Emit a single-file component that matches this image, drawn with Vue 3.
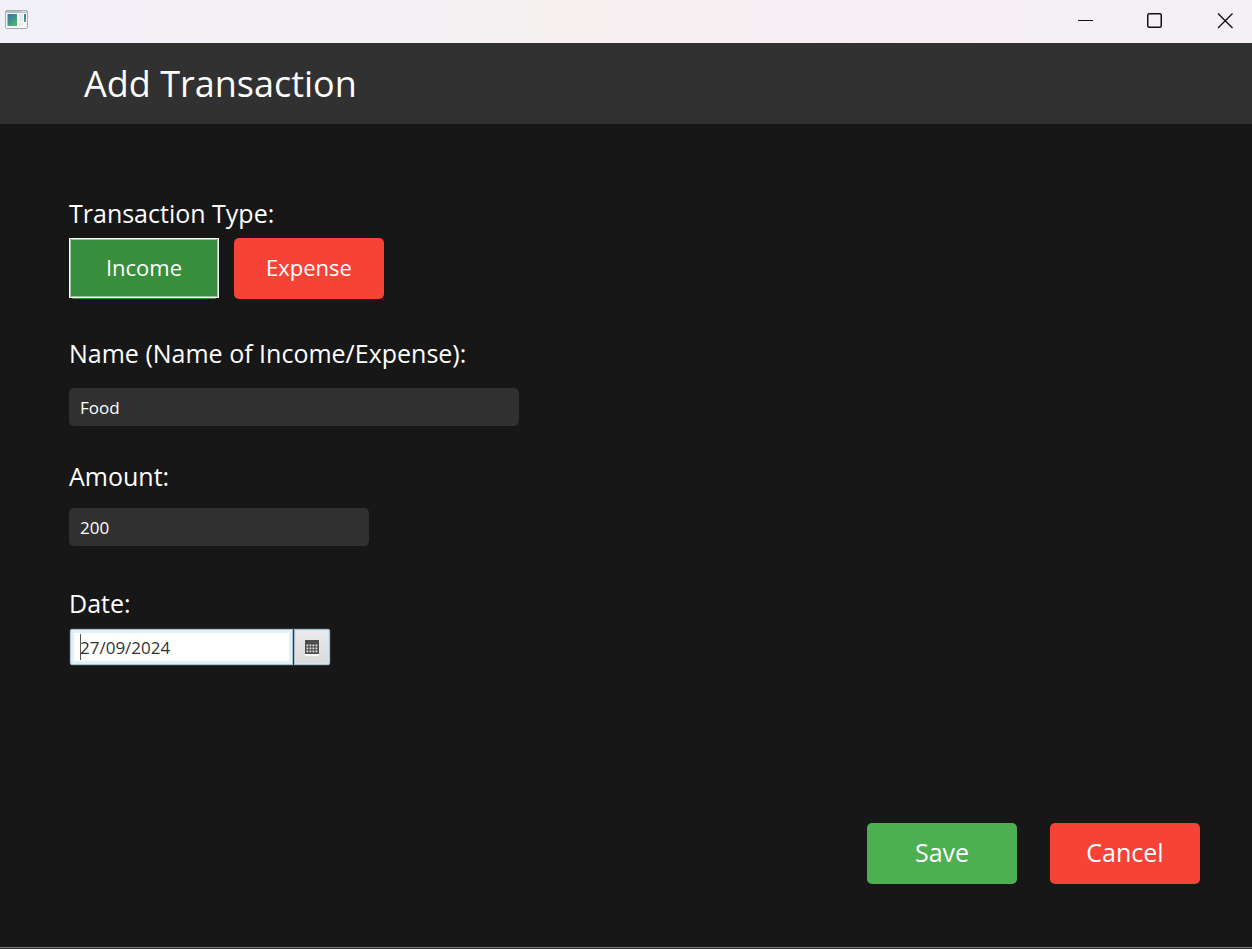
<script setup>
import { ref } from 'vue'

const type = ref('income')
const name = ref('Food')
const amount = ref('200')
const date = ref('27/09/2024')
</script>

<template>
  <div class="window">
    <div class="titlebar">
      <svg class="app-icon" width="24" height="20" viewBox="0 0 24 20" aria-hidden="true">
        <defs>
          <linearGradient id="pane" x1="0" y1="0" x2="0.6" y2="1">
            <stop offset="0" stop-color="#3f73a8" />
            <stop offset="0.5" stop-color="#3d8f92" />
            <stop offset="1" stop-color="#54b06c" />
          </linearGradient>
        </defs>
        <rect x="0.5" y="0.5" width="22" height="18" rx="1.5" fill="#f7f8f9" stroke="#a3abb3" />
        <rect x="1" y="1" width="21" height="2" fill="#b4bac1" />
        <rect x="16" y="1" width="5" height="1" fill="#e4e7ea" />
        <rect x="2.5" y="4" width="9.5" height="12" fill="url(#pane)" />
        <rect x="14" y="4" width="4" height="7" fill="#e6e8ea" />
        <rect x="14" y="12" width="4" height="4" fill="#e6e8ea" />
        <rect x="19" y="4" width="2" height="8" fill="url(#pane)" />
      </svg>
      <div class="window-controls">
        <button type="button" aria-label="Minimize">
          <svg width="16" height="16" viewBox="0 0 16 16"><path d="M1 8.5H16" /></svg>
        </button>
        <button type="button" aria-label="Maximize">
          <svg width="16" height="16" viewBox="0 0 16 16"><rect x="0.75" y="1.75" width="13.5" height="13.5" rx="1.5" stroke-width="1.5" /></svg>
        </button>
        <button type="button" aria-label="Close">
          <svg width="16" height="16" viewBox="0 0 16 16"><path d="M1 1.5L15.5 16M15.5 1.5L1 16" stroke-width="1.4" /></svg>
        </button>
      </div>
    </div>

    <header class="header">
      <h1>Add Transaction</h1>
    </header>

    <form class="form" @submit.prevent>
      <div class="field type-field" role="group" aria-labelledby="type-label">
        <span id="type-label" class="label">Transaction Type:</span>
        <div class="types">
          <button type="button" class="btn income" :class="{ selected: type === 'income' }" @click="type = 'income'">Income</button>
          <button type="button" class="btn red" :class="{ selected: type === 'expense' }" @click="type = 'expense'">Expense</button>
        </div>
      </div>

      <div class="field name-field">
        <label class="label" for="name">Name (Name of Income/Expense):</label>
        <input id="name" v-model="name" class="input" type="text" />
      </div>

      <div class="field amount-field">
        <label class="label" for="amount">Amount:</label>
        <input id="amount" v-model="amount" class="input" type="text" inputmode="decimal" />
      </div>

      <div class="field date-field">
        <label class="label" for="date">Date:</label>
        <div class="picker">
          <input id="date" v-model="date" type="text" />
          <span class="caret"></span>
          <button type="button" aria-label="Open calendar">
            <svg width="14" height="16" viewBox="0 0 14 16">
              <rect y="14" width="14" height="2" fill="#fff" />
              <rect width="14" height="14" fill="#4d4d4d" />
              <g fill="#e4e4e4">
                <template v-for="row in 3" :key="row">
                  <rect v-for="col in 4" :key="col" :x="col * 3 - 1.5" :y="row * 3 + 1.5" width="1.8" height="1.8" />
                </template>
              </g>
            </svg>
          </button>
        </div>
      </div>

      <div class="actions">
        <button type="submit" class="btn large green">Save</button>
        <button type="button" class="btn large red">Cancel</button>
      </div>
    </form>
  </div>
</template>

<style>
body {
  background: #171717;
}
</style>

<style scoped>
.window {
  box-sizing: border-box;
  display: flex;
  flex-direction: column;
  min-height: 100vh;
  background: #171717;
  border-bottom: 1px solid #303030;
  box-shadow: inset 0 -1px #807c80;
  color: #fff;
  font-family: "Open Sans", "Noto Sans", sans-serif;
}

.titlebar {
  display: flex;
  align-items: center;
  justify-content: space-between;
  height: 43px;
  padding-left: 5px;
  background: linear-gradient(90deg, #f2f1f7 0%, #f4f0f6 25%, #f6f0f0 45%, #f5eff5 68%, #f5f0f5 100%);
}

.app-icon {
  margin-bottom: 3px;
}

.window-controls {
  display: flex;
  gap: 16px;
  padding-bottom: 3px;
}

.window-controls button {
  display: flex;
  align-items: center;
  justify-content: center;
  width: 54px;
  height: 40px;
  padding: 0;
  border: 0;
  background: none;
}

.window-controls svg {
  fill: none;
  stroke: #111;
  overflow: visible;
}

.header {
  display: flex;
  align-items: center;
  height: 81px;
  padding-left: 84px;
  background: #313131;
}

h1 {
  margin: 0;
  font-size: 36px;
  font-weight: 400;
  line-height: 52px;
}

.form {
  display: flex;
  flex: 1;
  flex-direction: column;
  padding: 71px 52px 64px 69px;
}

.field {
  display: flex;
  flex-direction: column;
  align-items: flex-start;
}

.label {
  font-size: 25px;
  line-height: 36px;
}

.types {
  display: flex;
  gap: 15px;
}

.type-field {
  gap: 7px;
}

.name-field {
  gap: 17px;
  margin-top: 36px;
}

.amount-field {
  gap: 14px;
  margin-top: 32px;
}

.date-field {
  gap: 7px;
  margin-top: 39px;
}

.btn {
  position: relative;
  width: 150px;
  height: 61px;
  padding: 0 0 3px;
  border: 0;
  border-radius: 5px;
  color: #fff;
  font-family: inherit;
  font-size: 22px;
  line-height: 32px;
}

.large {
  font-size: 25px;
}

.income,
.green {
  background: #4caf50;
}

.red {
  background: #f64337;
}

.income.selected {
  background: #388e3c;
}

.selected::after {
  content: "";
  position: absolute;
  inset: 0 0 1px;
  border: 1px solid #fff;
  box-shadow: inset 0 0 0 1px rgba(255, 255, 255, 0.5);
}

.input {
  box-sizing: border-box;
  height: 38px;
  padding: 0 11px;
  border: 0;
  border-radius: 5px;
  background: #313131;
  color: #fff;
  font-family: inherit;
  font-size: 17px;
}

.name-field .input {
  width: 450px;
}

.amount-field .input {
  width: 300px;
}

.picker {
  box-sizing: border-box;
  position: relative;
  display: flex;
  width: 262px;
  height: 38px;
  border: 1px solid #2c3336;
  border-radius: 4px;
}

.picker input {
  flex: 1;
  min-width: 0;
  padding: 0 10px;
  border: 0;
  border-radius: 3px 0 0 3px;
  background: #fff;
  box-shadow: inset 0 0 0 1px #a9bfc9, inset 0 0 0 4px #e2f1f7;
  color: #333;
  font-family: inherit;
  font-size: 17px;
}

.picker button {
  display: flex;
  align-items: center;
  justify-content: center;
  width: 37px;
  padding: 2px 0 0;
  border: 0;
  border-left: 1px solid #243943;
  border-radius: 0 3px 3px 0;
  background: linear-gradient(#ececec, #d9d9d9);
  box-shadow: inset 0 0 0 1px #a9bfc9, inset 0 0 0 2px #d5e5ed;
}

.caret {
  position: absolute;
  top: 5px;
  left: 10px;
  width: 1px;
  height: 26px;
  background: #555;
}

.actions {
  display: flex;
  flex-wrap: wrap;
  justify-content: flex-end;
  gap: 33px;
  margin-top: auto;
}
</style>
